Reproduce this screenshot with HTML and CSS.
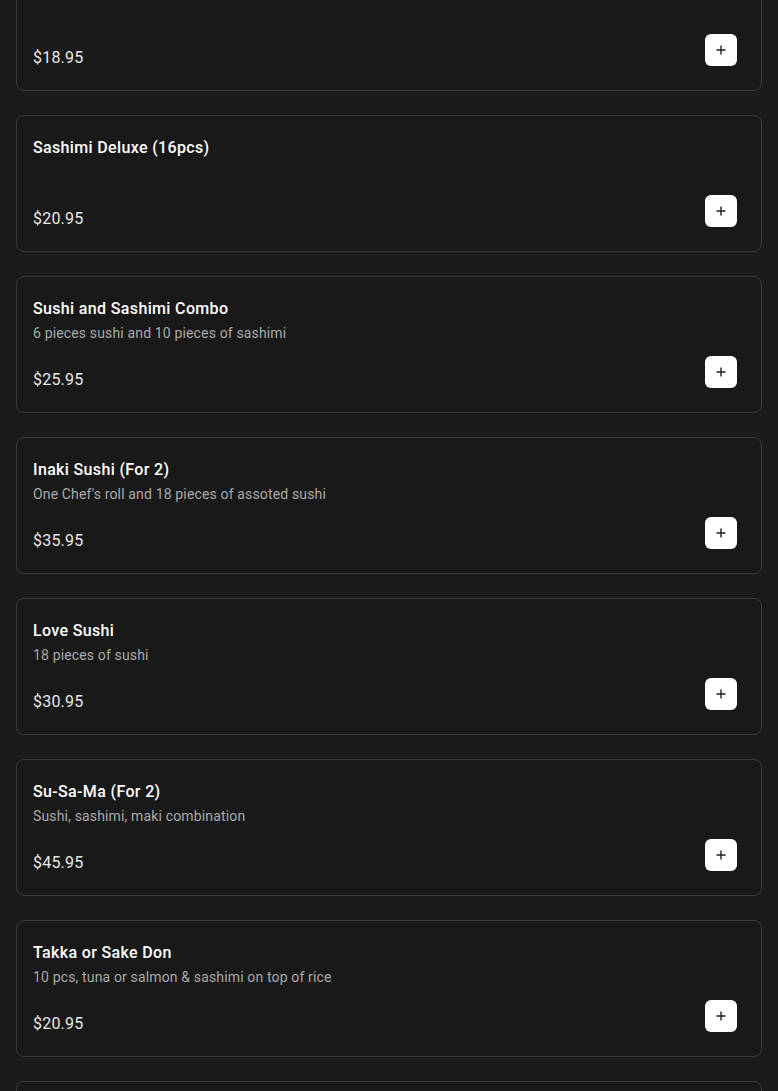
FILE: index.html
```html
<!DOCTYPE html>
<html lang="en">
<head>
    <meta charset="UTF-8">
    <meta name="viewport" content="width=device-width, initial-scale=1.0">
    <title>Sushi Platters</title>
    <link rel="stylesheet" href="styles.css">
</head>
<body>
    <main class="menu-list">
        <div class="menu-item">
            <h3 class="item-name">Sashimi Regular (12pcs)</h3>
            <p class="item-desc"></p>
            <div class="item-footer">
                <span class="item-price">$18.95</span>
                <button class="add-button" aria-label="Add"><svg viewBox="0 0 12 12"><path d="M6 1.5v9M1.5 6h9"/></svg></button>
            </div>
        </div>

        <div class="menu-item">
            <h3 class="item-name">Sashimi Deluxe (16pcs)</h3>
            <p class="item-desc"></p>
            <div class="item-footer">
                <span class="item-price">$20.95</span>
                <button class="add-button" aria-label="Add"><svg viewBox="0 0 12 12"><path d="M6 1.5v9M1.5 6h9"/></svg></button>
            </div>
        </div>

        <div class="menu-item">
            <h3 class="item-name">Sushi and Sashimi Combo</h3>
            <p class="item-desc">6 pieces sushi and 10 pieces of sashimi</p>
            <div class="item-footer">
                <span class="item-price">$25.95</span>
                <button class="add-button" aria-label="Add"><svg viewBox="0 0 12 12"><path d="M6 1.5v9M1.5 6h9"/></svg></button>
            </div>
        </div>

        <div class="menu-item">
            <h3 class="item-name">Inaki Sushi (For 2)</h3>
            <p class="item-desc">One Chef's roll and 18 pieces of assoted sushi</p>
            <div class="item-footer">
                <span class="item-price">$35.95</span>
                <button class="add-button" aria-label="Add"><svg viewBox="0 0 12 12"><path d="M6 1.5v9M1.5 6h9"/></svg></button>
            </div>
        </div>

        <div class="menu-item">
            <h3 class="item-name">Love Sushi</h3>
            <p class="item-desc">18 pieces of sushi</p>
            <div class="item-footer">
                <span class="item-price">$30.95</span>
                <button class="add-button" aria-label="Add"><svg viewBox="0 0 12 12"><path d="M6 1.5v9M1.5 6h9"/></svg></button>
            </div>
        </div>

        <div class="menu-item">
            <h3 class="item-name">Su-Sa-Ma (For 2)</h3>
            <p class="item-desc">Sushi, sashimi, maki combination</p>
            <div class="item-footer">
                <span class="item-price">$45.95</span>
                <button class="add-button" aria-label="Add"><svg viewBox="0 0 12 12"><path d="M6 1.5v9M1.5 6h9"/></svg></button>
            </div>
        </div>

        <div class="menu-item">
            <h3 class="item-name">Takka or Sake Don</h3>
            <p class="item-desc">10 pcs, tuna or salmon &amp; sashimi on top of rice</p>
            <div class="item-footer">
                <span class="item-price">$20.95</span>
                <button class="add-button" aria-label="Add"><svg viewBox="0 0 12 12"><path d="M6 1.5v9M1.5 6h9"/></svg></button>
            </div>
        </div>

        <div class="menu-item">
            <h3 class="item-name">Chirashi Don</h3>
            <p class="item-desc">Assorted sashimi on top of rice</p>
            <div class="item-footer">
                <span class="item-price">$22.95</span>
                <button class="add-button" aria-label="Add"><svg viewBox="0 0 12 12"><path d="M6 1.5v9M1.5 6h9"/></svg></button>
            </div>
        </div>
    </main>
</body>
</html>
```

FILE: styles.css
```css
* {
    margin: 0;
    padding: 0;
    box-sizing: border-box;
}

body {
    font-family: Roboto, "Liberation Sans", sans-serif;
    background-color: #1b1b1b;
    color: #fff;
}

/* page is scrolled a little: first card starts above the viewport */
.menu-list {
    display: flex;
    flex-direction: column;
    gap: 24px;
    padding: 0 16px 24px;
    margin-top: -46px;
}

.menu-item {
    background-color: #191919;
    border: 1px solid #3a3a3a;
    border-radius: 8px;
    padding: 20px 24px 20px 16px;
}

.item-name {
    font-size: 16px;
    font-weight: 500;
    line-height: 24px;
    color: #fff;
    letter-spacing: 0.35px;
}

.item-desc {
    font-size: 14px;
    line-height: 24px;
    min-height: 24px;
    color: #a9a9a9;
    letter-spacing: 0.15px;
}

.item-footer {
    display: flex;
    justify-content: space-between;
    align-items: flex-end;
    margin-top: 11px;
}

.item-price {
    font-size: 16px;
    line-height: 24px;
    color: #e8e8e8;
    letter-spacing: 0.2px;
}

.add-button {
    width: 32px;
    height: 32px;
    margin-bottom: 4px;
    border: none;
    border-radius: 6px;
    background: #fff;
    display: flex;
    align-items: center;
    justify-content: center;
    cursor: pointer;
}

.add-button svg {
    width: 12px;
    height: 12px;
    fill: none;
    stroke: #1e1e1e;
    stroke-width: 1.4;
}
```
